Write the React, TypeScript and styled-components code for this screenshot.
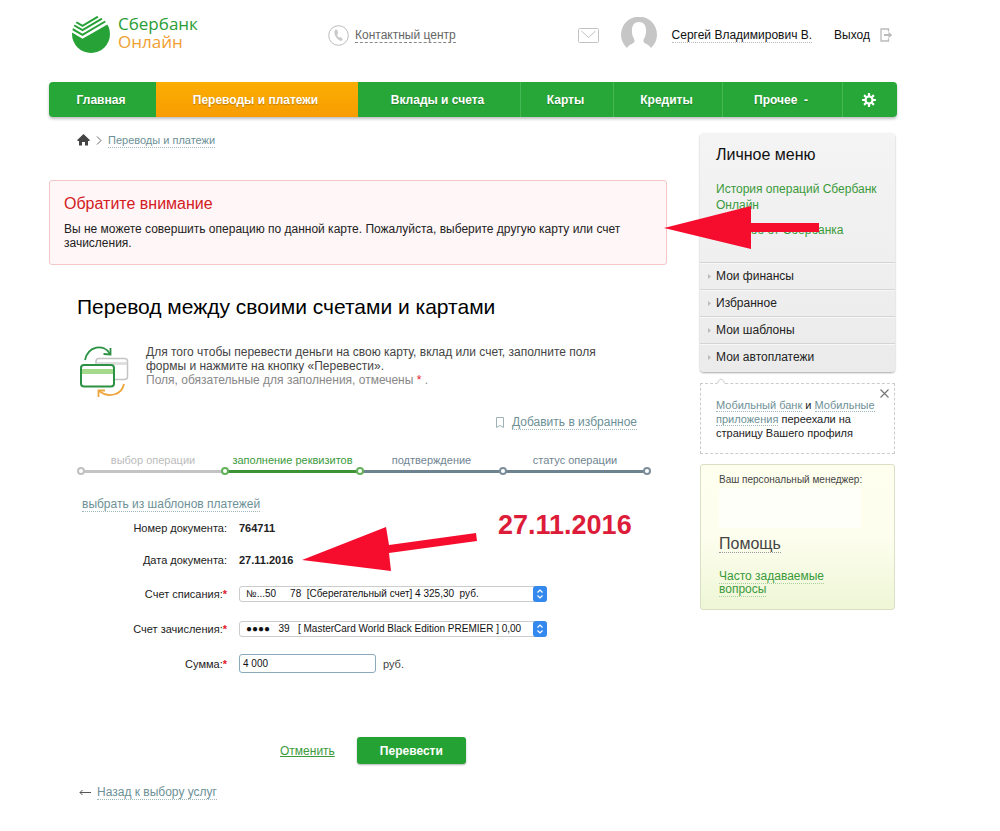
import React from "react";
import styled, { createGlobalStyle, css } from "styled-components";

const GlobalStyle = createGlobalStyle`
  *, *::before, *::after { box-sizing: border-box; }
  body {
    margin: 0;
    background: #fff;
    color: #222;
    font-family: "Liberation Sans", Arial, Helvetica, sans-serif;
    font-size: 12px;
    line-height: 14px;
  }
  h1, h2, h3, p, ul, ol { margin: 0; padding: 0; font-weight: normal; }
  ul, ol { list-style: none; }
  a { color: inherit; text-decoration: none; }
  button, input, select { font-family: inherit; margin: 0; }
`;

const Page = styled.div`
  padding: 0 103px 24px 49px;
`;

/* ---------- header ---------- */

const Header = styled.header`
  display: flex;
  align-items: flex-start;
  height: 82px;
  padding: 15px 4px 0 23px;
`;

const Brand = styled.a`
  display: flex;
  gap: 8px;
`;

const BrandName = styled.span`
  display: flex;
  flex-direction: column;
  width: 100px;
  font-family: "Open Sans", "Noto Sans", sans-serif;
  font-size: 17px;
  line-height: 18px;
  color: #2a9d36;
`;

const BrandSub = styled.span`
  color: #f0a030;
`;

const Contact = styled.a`
  display: flex;
  align-items: center;
  gap: 6px;
  margin: 10px auto 0 110px;
  color: #666;
`;

const ContactText = styled.span`
  border-bottom: 1px dashed #888;
`;

const UserBar = styled.div`
  display: flex;
  align-items: center;
  height: 40px;
  color: #111;
  white-space: nowrap;
`;

const UserName = styled.a`
  margin: 0 22px 0 15px;
  border-bottom: 1px dotted #bbb;
`;

const Avatar = styled.svg`
  margin-left: 22px;
`;

const Exit = styled.a`
  display: flex;
  align-items: center;
  gap: 10px;
`;

/* ---------- navigation ---------- */

const Nav = styled.nav`
  display: grid;
  grid-template-columns: 107fr 202fr 162fr 93fr 109fr 120fr 55fr;
  height: 35px;
  border-radius: 4px;
  overflow: hidden;
  background: #27a737;
  box-shadow: 0 2px 3px rgba(0, 0, 0, 0.25);
`;

const NavItem = styled.a<{ $active?: boolean; $divided?: boolean }>`
  display: flex;
  align-items: center;
  justify-content: center;
  padding-right: 3px;
  color: #fff;
  font-size: 12px;
  font-weight: bold;
  text-shadow: 0 1px 1px rgba(0, 0, 0, 0.25);
  ${(p) => p.$divided && css`border-left: 1px solid #45b854;`}
  ${(p) => p.$active && css`background: linear-gradient(#fbae04, #f79c00);`}
`;

/* ---------- page body ---------- */

const Columns = styled.div`
  display: flex;
  align-items: flex-start;
  gap: 33px;
  padding: 16px 2px 0 0;
`;

const Main = styled.main`
  flex: 1;
  min-width: 0;
`;

const Link = styled.a`
  color: #6c9096;
  border-bottom: 1px dotted #9fb8bc;
`;

const Breadcrumbs = styled.nav`
  display: flex;
  align-items: center;
  gap: 6px;
  height: 14px;
  padding-left: 28px;
  font-size: 11px;
`;

const Alert = styled.section`
  margin-top: 33px;
  min-height: 85px;
  padding: 14px;
  border: 1px solid #f3c6c8;
  border-radius: 3px;
  background: #fff6f7;
`;

const AlertTitle = styled.h2`
  margin-bottom: 9px;
  font-size: 16px;
  line-height: 18px;
  color: #d3201f;
`;

const Content = styled.div`
  padding: 0 20px 0 28px;
`;

const Title = styled.h1`
  margin-top: 30px;
  font-size: 21px;
  line-height: 24px;
  color: #000;
`;

const Intro = styled.div`
  display: flex;
  gap: 12px;
  margin-top: 23px;
  color: #444;
`;

const IntroText = styled.p`
  padding-top: 3px;
`;

const Muted = styled.span`
  color: #888;
`;

const Required = styled.span`
  color: #e3202c;
`;

const Favourite = styled.div`
  display: flex;
  justify-content: flex-end;
  align-items: center;
  gap: 8px;
  margin: 15px 10px 0 0;
`;

/* ---------- progress steps ---------- */

const Steps = styled.ol`
  display: grid;
  grid-template-columns: 144fr 135fr 143fr 144fr;
  margin: 23px 0 0 4px;
`;

const Step = styled.li<{ $line: string; $dot: string; $text: string }>`
  position: relative;
  height: 20px;
  border-bottom: 3px solid ${(p) => p.$line};
  color: ${(p) => p.$text};
  font-size: 11px;
  text-align: center;
  white-space: nowrap;

  &::before,
  &:last-child::after {
    content: "";
    position: absolute;
    left: -4px;
    bottom: -5px;
    width: 8px;
    height: 8px;
    border: 2px solid ${(p) => p.$dot};
    border-radius: 50%;
    background: #fff;
  }
  &:last-child::after {
    left: auto;
    right: -4px;
  }
`;

/* ---------- form ---------- */

const Templates = styled.div`
  margin: 24px 0 1px 5px;
`;

const Row = styled.div<{ $size?: "small" }>`
  position: relative;
  display: grid;
  grid-template-columns: 150px 1fr;
  column-gap: 12px;
  align-items: center;
  height: ${(p) => (p.$size === "small" ? "32px" : "35px")};
`;

const Label = styled.label`
  font-size: 11px;
  text-align: right;
  white-space: nowrap;

  ${Required} { font-weight: bold; }
`;

const Value = styled.output`
  font-size: 11px;
  font-weight: bold;
`;

const SelectBox = styled.span`
  position: relative;
  display: block;
  width: 308px;
  height: 16px;
`;

const Select = styled.select`
  display: block;
  width: 100%;
  height: 16px;
  padding: 0 15px 0 6px;
  border: 1px solid #ccc;
  border-radius: 3px;
  background: #fff;
  color: #111;
  font-size: 10px;
  line-height: 14px;
  appearance: none;
`;

const SelectArrow = styled.svg`
  position: absolute;
  top: 0;
  right: 0;
  pointer-events: none;
`;

const Amount = styled.span`
  display: flex;
  align-items: center;
  gap: 7px;
  font-size: 11px;
  color: #444;
`;

const AmountInput = styled.input`
  width: 137px;
  height: 19px;
  padding: 0 3px;
  border: 1px solid #8ba9bd;
  border-radius: 3px;
  color: #111;
  font-size: 10px;
`;

const Actions = styled.div`
  display: flex;
  align-items: center;
  gap: 22px;
  margin: 56px 0 0 203px;
`;

const Cancel = styled.a`
  color: #3b9a3b;
  text-decoration: underline;
`;

const Submit = styled.button`
  width: 109px;
  height: 27px;
  border: 0;
  border-radius: 3px;
  background: #24a233;
  box-shadow: 0 1px 2px rgba(0, 0, 0, 0.3);
  color: #fff;
  font-size: 12px;
  font-weight: bold;
`;

const Back = styled.div`
  display: flex;
  align-items: center;
  gap: 6px;
  margin: 21px 0 0 2px;
`;

/* ---------- sidebar ---------- */

const Sidebar = styled.aside`
  flex: 0 0 195px;
`;

const Menu = styled.section`
  padding-bottom: 2px;
  border-radius: 4px;
  background: linear-gradient(#f4f4f4, #ebebeb);
  box-shadow: 0 1px 2px rgba(0, 0, 0, 0.35);
  color: #222;
`;

const MenuTop = styled.div`
  position: relative;
  display: flex;
  flex-direction: column;
  gap: 9px;
  height: 129px;
  padding: 13px 10px 0 16px;
  line-height: 16px;
`;

const MenuTitle = styled.h2`
  margin-bottom: 8px;
  font-size: 16px;
  line-height: 18px;
  color: #111;
`;

const GreenLink = styled.a`
  color: #3b9a3b;
`;

const MenuItem = styled.a`
  display: flex;
  align-items: center;
  gap: 5px;
  height: 27px;
  padding-left: 8px;
  border-top: 1px solid #d4d4d4;
  box-shadow: inset 0 1px 0 #f8f8f8;
`;

const Notice = styled.section`
  position: relative;
  min-height: 71px;
  margin-top: 11px;
  padding: 14px 14px 0 15px;
  border: 1px dashed #ccc;
  font-size: 11px;
`;

const NoticePin = styled.svg`
  position: absolute;
  top: -6px;
  left: 14px;
`;

const Close = styled.button`
  position: absolute;
  top: 5px;
  right: 5px;
  display: flex;
  padding: 0;
  border: 0;
  background: none;
`;

const Manager = styled.section`
  min-height: 146px;
  margin-top: 10px;
  padding: 8px 18px 0;
  border: 1px solid #d9e0c4;
  border-radius: 3px;
  background: linear-gradient(#fffff0, #fdfeee 50%, #eef6d6);
  color: #444;
  font-size: 10px;
`;

const ManagerPhoto = styled.div`
  width: 142px;
  height: 40px;
  margin-top: 1px;
  background: rgba(255, 255, 255, 0.6);
`;

const HelpTitle = styled.h2`
  margin: 7px 0 17px;
  font-size: 16px;
  line-height: 18px;

  a { border-bottom: 1px dotted #999; }
`;

const Faq = styled.p`
  width: 120px;
  font-size: 12px;
  line-height: 13px;

  a { border-bottom: 1px dotted #a8cf9c; }
`;

/* ---------- red callouts lying over the page ---------- */

const MenuArrow = styled.svg`
  position: absolute;
  top: 73px;
  left: -36px;
`;

const DateCallout = styled.div`
  position: absolute;
  top: -18px;
  left: 225px;
  display: flex;
  align-items: flex-start;
  gap: 21px;
`;

const DateNote = styled.strong`
  margin-top: -16px;
  color: #dc1c38;
  font-size: 27px;
  line-height: 30px;
`;

const NB = "\u00a0";

const steps = [
  { text: "выбор операции", line: "#c4c4c4", dot: "#c0c0c0", color: "#bbb" },
  { text: "заполнение реквизитов", line: "#3f9233", dot: "#63b158", color: "#3b9a3b" },
  { text: "подтверждение", line: "#6f8290", dot: "#63b158", color: "#708592" },
  { text: "статус операции", line: "#6f8290", dot: "#7d8f9c", color: "#708592" },
];

const menuItems = ["Мои финансы", "Избранное", "Мои шаблоны", "Мои автоплатежи"];

const Logo = () => (
  <svg width="38" height="38" viewBox="0 0 38 38">
    <defs>
      <clipPath id="disc"><circle cx="19" cy="19" r="19" /></clipPath>
    </defs>
    <g clipPath="url(#disc)">
      <path d="M-1 17 L10.5 23.8 L38 8 V38 H-1Z" fill="#27a237" />
      <g fill="none" stroke="#27a237" strokeWidth="2">
        <path d="M4 7 L10.5 10.8 L26 1.6" />
        <path d="M1.5 10 L10.5 15.2 L30 3.7" />
        <path d="M-1 13.2 L10.5 19.8 L34 6" />
      </g>
    </g>
  </svg>
);

const PhoneIcon = () => (
  <svg width="21" height="21" viewBox="0 0 21 21" fill="none" stroke="#bbb">
    <circle cx="10.5" cy="10.5" r="9.8" />
    <path d="M7.2 5.2 C5.6 8.5 8.6 14.6 13 15.6 C14 15.6 14.5 14.4 14.2 13.8 L12.2 12.3 L11.2 13.1 C9.9 12.2 9 10.6 8.8 9.2 L9.9 8.5 L9.2 5.6 C8.7 4.7 7.7 4.6 7.2 5.2Z" fill="#ccc" strokeWidth=".5" />
  </svg>
);

const MailIcon = () => (
  <svg width="21" height="15" viewBox="0 0 21 15" fill="none" stroke="#c2c2c2">
    <rect x=".5" y=".5" width="20" height="14" rx="1" />
    <path d="M3.5 3 L10.5 9.5 L17.5 3" />
  </svg>
);

const Person = () => (
  <Avatar width="36" height="36" viewBox="0 0 36 36">
    <path d="M6 31 A18 18 0 1 1 30 31 C28 27 23 27 22.5 24.5 C22 22 25 20 25 15 C25.5 9 23 5 18 5 C13 5 10.5 9 11 15 C11 20 14 22 13.5 24.5 C13 27 8 27 6 31Z" fill="#c6c6c6" />
  </Avatar>
);

const ExitIcon = () => (
  <svg width="13" height="14" viewBox="0 0 13 14" fill="none" stroke="#bbb" strokeWidth="1.3">
    <path d="M8.5 3.5 V1 H1 V13 H8.5 V10.5" />
    <path d="M4 7 H9.5" strokeWidth="2" />
    <path d="M8.5 3.8 L12.3 7 L8.5 10.2Z" fill="#bbb" stroke="none" />
  </svg>
);

const Gear = () => (
  <svg width="14" height="14" viewBox="-7 -7 14 14" fill="none" stroke="#fff">
    <circle r="3.5" strokeWidth="2.2" />
    {[0, 45, 90, 135].map((a) => (
      <g key={a} transform={`rotate(${a})`} strokeWidth="2.2">
        <path d="M0 -6.9 V-4 M0 4 V6.9" />
      </g>
    ))}
  </svg>
);

const HomeIcon = () => (
  <svg width="13" height="12" viewBox="0 0 13 12" fill="#444">
    <path d="M6.5 0 L13 6.3 L12 7 H11 V11.5 H8 V8 H5 V11.5 H2 V7 H1 L0 6.3Z" />
  </svg>
);

const CardsIcon = () => (
  <svg width="57" height="58" viewBox="0 0 57 58" fill="none">
    <rect x="19" y="16.5" width="31.5" height="21" rx="3" stroke="#c4c4c4" strokeWidth="1.5" />
    <path d="M20 20 H50 V23 H20Z" fill="#dedede" />
    <rect x="4" y="23" width="33" height="21.5" rx="3" fill="#fff" stroke="#2b9243" strokeWidth="2" />
    <path d="M5 27 H36 V32 H5Z" fill="#a5d98b" />
    <path d="M8 18 C11 4 27 1 33 12" stroke="#2b9243" strokeWidth="1.8" />
    <path d="M26.5 12 L33.5 12.5 L33.5 6" stroke="#2b9243" strokeWidth="1.8" />
    <path d="M47 42 C45 52 33 57 22 49" stroke="#eda53c" strokeWidth="1.8" />
    <path d="M21.5 55 V48.5 H28" stroke="#eda53c" strokeWidth="1.8" />
  </svg>
);

const Chevrons = () => (
  <SelectArrow width="14" height="16" viewBox="0 0 14 16">
    <rect width="14" height="16" rx="3" fill="#3489ee" />
    <path d="M4.5 6.5 L7 4 L9.5 6.5 M4.5 9.5 L7 12 L9.5 9.5" fill="none" stroke="#fff" strokeWidth="1.2" />
  </SelectArrow>
);

export default function App() {
  return (
    <>
      <GlobalStyle />
      <Page>
        <Header>
          <Brand href="#">
            <Logo />
            <BrandName>
              <span>Сбербанк</span>
              <BrandSub>Онлайн</BrandSub>
            </BrandName>
          </Brand>
          <Contact href="#">
            <PhoneIcon />
            <ContactText>Контактный центр</ContactText>
          </Contact>
          <UserBar>
            <MailIcon />
            <Person />
            <UserName href="#">Сергей Владимирович В.</UserName>
            <Exit href="#">
              Выход
              <ExitIcon />
            </Exit>
          </UserBar>
        </Header>

        <Nav>
          <NavItem href="#">Главная</NavItem>
          <NavItem href="#" $active>Переводы и платежи</NavItem>
          <NavItem href="#">Вклады и счета</NavItem>
          <NavItem href="#" $divided>Карты</NavItem>
          <NavItem href="#" $divided>Кредиты</NavItem>
          <NavItem href="#" $divided>Прочее{NB}{NB}-</NavItem>
          <NavItem href="#" $divided aria-label="Настройки"><Gear /></NavItem>
        </Nav>

        <Columns>
          <Main>
            <Breadcrumbs>
              <HomeIcon />
              <svg width="6" height="9" viewBox="0 0 6 9" fill="none" stroke="#666">
                <path d="M1 .5 L5 4.5 L1 8.5" />
              </svg>
              <Link href="#">Переводы и платежи</Link>
            </Breadcrumbs>

            <Alert>
              <AlertTitle>Обратите внимание</AlertTitle>
              <p>
                Вы не можете совершить операцию по данной карте. Пожалуйста, выберите другую карту или счет
                зачисления.
              </p>
            </Alert>

            <Content>
              <Title>Перевод между своими счетами и картами</Title>
              <Intro>
                <CardsIcon />
                <IntroText>
                  Для того чтобы перевести деньги на свою карту, вклад или счет, заполните поля
                  <br />
                  формы и нажмите на кнопку «Перевести».
                  <br />
                  <Muted>Поля, обязательные для заполнения, отмечены <Required>*</Required> .</Muted>
                </IntroText>
              </Intro>

              <Favourite>
                <svg width="8" height="11" viewBox="0 0 8 11" fill="none" stroke="#9fb3b7">
                  <path d="M.5 .5 H7.5 V10.5 L4 8.5 L.5 10.5Z" />
                </svg>
                <Link href="#">Добавить в избранное</Link>
              </Favourite>

              <Steps>
                {steps.map((s) => (
                  <Step key={s.text} $line={s.line} $dot={s.dot} $text={s.color}>{s.text}</Step>
                ))}
              </Steps>

              <form onSubmit={(e) => e.preventDefault()}>
                <Templates><Link href="#">выбрать из шаблонов платежей</Link></Templates>
                <Row $size="small">
                  <Label htmlFor="number">Номер документа:</Label>
                  <Value id="number">764711</Value>
                </Row>
                <Row $size="small">
                  <Label htmlFor="date">Дата документа:</Label>
                  <Value id="date">27.11.2016</Value>
                  <DateCallout>
                    <svg width="175" height="46" viewBox="0 0 175 46">
                      <path d="M0 34 L84 1 L87 19 L174 7 L175 15 L87 27 L89 45Z" fill="#f60d2e" />
                    </svg>
                    <DateNote>27.11.2016</DateNote>
                  </DateCallout>
                </Row>
                <Row>
                  <Label htmlFor="from">Счет списания:<Required>*</Required></Label>
                  <SelectBox>
                    <Select id="from">
                      <option>{`№...50${NB.repeat(5)}78${NB.repeat(2)}[Сберегательный счет] 4 325,30${NB.repeat(2)}руб.`}</option>
                    </Select>
                    <Chevrons />
                  </SelectBox>
                </Row>
                <Row>
                  <Label htmlFor="to">Счет зачисления:<Required>*</Required></Label>
                  <SelectBox>
                    <Select id="to">
                      <option>{`●●●●${NB.repeat(3)}39${NB.repeat(3)}[ MasterCard World Black Edition PREMIER ] 0,00`}</option>
                    </Select>
                    <Chevrons />
                  </SelectBox>
                </Row>
                <Row>
                  <Label htmlFor="sum">Сумма:<Required>*</Required></Label>
                  <Amount>
                    <AmountInput id="sum" type="text" defaultValue="4 000" />
                    руб.
                  </Amount>
                </Row>
                <Actions>
                  <Cancel href="#">Отменить</Cancel>
                  <Submit type="submit">Перевести</Submit>
                </Actions>
              </form>

              <Back>
                <svg width="12" height="7" viewBox="0 0 12 7" fill="none" stroke="#555">
                  <path d="M12 3.5 H1 M3.5 1 L1 3.5 L3.5 6" />
                </svg>
                <Link href="#">Назад к выбору услуг</Link>
              </Back>
            </Content>
          </Main>

          <Sidebar>
            <Menu>
              <MenuTop>
                <MenuTitle>Личное меню</MenuTitle>
                <GreenLink href="#">История операций Сбербанк Онлайн</GreenLink>
                <GreenLink href="#">Спасибо от Сбербанка</GreenLink>
                <MenuArrow width="156" height="44" viewBox="0 0 156 44">
                  <path d="M0 22 L87 0 V17 H155 V26 H87 V43Z" fill="#f60d2e" />
                </MenuArrow>
              </MenuTop>
              <nav>
                {menuItems.map((item) => (
                  <MenuItem key={item} href="#">
                    <svg width="3" height="5" viewBox="0 0 3 5"><path d="M0 0 L3 2.5 L0 5Z" fill="#bbb" /></svg>
                    {item}
                  </MenuItem>
                ))}
              </nav>
            </Menu>

            <Notice>
              <NoticePin width="12" height="6" viewBox="0 0 12 6">
                <path d="M0 6 Q3 6 3.5 3 Q6 -1 8.5 3 Q9 6 12 6" fill="#fff" stroke="#ccc" />
              </NoticePin>
              <Link href="#">Мобильный банк</Link> и <Link href="#">Мобильные приложения</Link> переехали на
              страницу Вашего профиля
              <Close type="button" aria-label="Закрыть">
                <svg width="9" height="9" viewBox="0 0 9 9" fill="none" stroke="#777" strokeWidth="1.2">
                  <path d="M.5 .5 L8.5 8.5 M8.5 .5 L.5 8.5" />
                </svg>
              </Close>
            </Notice>

            <Manager>
              Ваш персональный менеджер:
              <ManagerPhoto />
              <HelpTitle><a href="#">Помощь</a></HelpTitle>
              <Faq><GreenLink href="#">Часто задаваемые вопросы</GreenLink></Faq>
            </Manager>
          </Sidebar>
        </Columns>
      </Page>
    </>
  );
}
